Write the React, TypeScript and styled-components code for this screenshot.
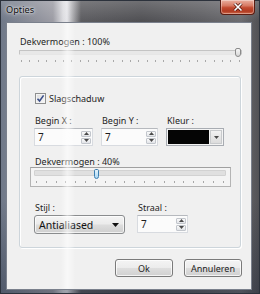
import React from 'react';
import styled, { createGlobalStyle } from 'styled-components';

const GlobalStyle = createGlobalStyle`
  html, body {
    margin: 0;
    padding: 0;
    background: #ffffff;
  }
  body {
    font-family: "Noto Sans", "Open Sans", sans-serif;
    font-size: 9px;
    color: #1e1e1e;
  }
`;

const SLIDER_TICKS = 27;
const FRAMED_TICKS = 20;

const Ticks: React.FC<{ count: number }> = ({ count }) => (
  <TickRow>
    {Array.from({ length: count }).map((_, i) => (
      <Tick key={i} />
    ))}
  </TickRow>
);

const Slider: React.FC<{ value: number; active?: boolean }> = ({ value, active }) => (
  <SliderBody>
    <Track>
      <Thumb $active={active} style={{ left: `calc(${value}% - ${value / 100 * 6}px)` }} />
    </Track>
    <Ticks count={active ? FRAMED_TICKS : SLIDER_TICKS} />
  </SliderBody>
);

const Arrow: React.FC<{ up?: boolean }> = ({ up }) => (
  <svg width="5" height="3" viewBox="0 0 5 3">
    <path d={up ? 'M0 3 L2.5 0 L5 3 Z' : 'M0 0 L2.5 3 L5 0 Z'} fill="#4a4a4a" />
  </svg>
);

const SpinBox: React.FC<{ value: string; width: number }> = ({ value, width }) => (
  <SpinFrame $width={width}>
    <SpinText>{value}</SpinText>
    <SpinButtons>
      <SpinButton><Arrow up /></SpinButton>
      <SpinButton><Arrow /></SpinButton>
    </SpinButtons>
  </SpinFrame>
);

const App: React.FC = () => (
  <>
    <GlobalStyle />
    <Frame>
      <TitleBar>
        <Title>Opties</Title>
        <CloseButton>
          <svg width="10" height="8" viewBox="0 0 10 8">
            <path d="M1.5 0.5 L8.5 7.5 M8.5 0.5 L1.5 7.5" stroke="#4a1008" strokeWidth="3" />
            <path d="M1.5 0.5 L8.5 7.5 M8.5 0.5 L1.5 7.5" stroke="#ffffff" strokeWidth="1.6" />
          </svg>
        </CloseButton>
      </TitleBar>
      <Client>
        <Label>Dekvermogen : 100%</Label>
        <TopSlider>
          <Slider value={100} />
        </TopSlider>

        <Group>
          <CheckRow>
            <CheckBox>
              <svg width="9" height="9" viewBox="0 0 9 9">
                <path d="M1.5 4.8 L3.6 7 L7.6 1.4" stroke="#3a4e8a" strokeWidth="1.6" fill="none" />
              </svg>
            </CheckBox>
            <span>Slagschaduw</span>
          </CheckRow>

          <FieldRow $gap={8} $top={11}>
            <Field>
              <Label>Begin X :</Label>
              <SpinBox value="7" width={59} />
            </Field>
            <Field>
              <Label>Begin Y :</Label>
              <SpinBox value="7" width={57} />
            </Field>
            <Field>
              <Label>Kleur :</Label>
              <ColorCombo>
                <Swatch />
                <ColorDrop><Arrow /></ColorDrop>
              </ColorCombo>
            </Field>
          </FieldRow>

          <SubLabel>Dekvermogen : 40%</SubLabel>
          <SliderBox>
            <Slider value={32} active />
          </SliderBox>

          <FieldRow $gap={12} $top={15}>
            <Field>
              <Label>Stijl :</Label>
              <Combo>
                <span>Antialiased</span>
                <svg width="7" height="4" viewBox="0 0 7 4">
                  <path d="M0 0 L3.5 4 L7 0 Z" fill="#111" />
                </svg>
              </Combo>
            </Field>
            <Field>
              <Label>Straal :</Label>
              <SpinBox value="7" width={51} />
            </Field>
          </FieldRow>
        </Group>

        <ButtonRow>
          <Button>Ok</Button>
          <Button>Annuleren</Button>
        </ButtonRow>
        <Streak />
      </Client>
    </Frame>
  </>
);

const Frame = styled.div`
  width: 260px;
  height: 294px;
  box-sizing: border-box;
  display: flex;
  flex-direction: column;
  border: 1px solid #2c323c;
  background:
    linear-gradient(to bottom, rgba(255, 255, 255, 0.18) 0px, rgba(255, 255, 255, 0) 20px, rgba(0, 0, 0, 0) 200px, rgba(20, 30, 50, 0.35) 294px),
    linear-gradient(to right, #6f7888 0px, #8a8d98 30px, #9c9ca4 52px, #dcdce0 62px, #e6e6ea 66px, #a8a8ac 72px, #5c5c60 80px, #505054 140px, #5e5e62 200px, #6c6c70 240px, #4e4e52 260px);
`;

const TitleBar = styled.div`
  height: 21px;
  display: flex;
  justify-content: space-between;
  align-items: flex-start;
  padding-left: 5px;
  padding-right: 4px;
`;

const Title = styled.div`
  margin-top: 3px;
  font-size: 9.2px;
  line-height: 12px;
  color: #101010;
  text-shadow: 0 0 4px rgba(255, 255, 255, 0.9), 0 0 2px rgba(255, 255, 255, 0.8);
`;

const CloseButton = styled.div`
  width: 35px;
  height: 15px;
  margin-top: -1px;
  box-sizing: border-box;
  display: flex;
  align-items: center;
  justify-content: center;
  border: 1px solid #5a1c12;
  border-top: none;
  border-radius: 0 0 4px 4px;
  background: linear-gradient(to bottom, #eab0a0 0%, #d77a64 40%, #c24a30 55%, #b03a22 80%, #d06a4a 100%);
  box-shadow: inset 0 0 0 1px rgba(255, 255, 255, 0.35);
`;

const Client = styled.div`
  position: relative;
  width: 246px;
  height: 268px;
  margin-left: 5px;
  box-sizing: border-box;
  border: 1px solid #7a808c;
  background: #f0f0f0;
  padding: 13px 9px 0 12px;
  display: flex;
  flex-direction: column;
`;

const Streak = styled.div`
  position: absolute;
  top: 0;
  bottom: 0;
  left: 54px;
  width: 14px;
  pointer-events: none;
  background: linear-gradient(to right, rgba(255, 255, 255, 0) 0%, rgba(255, 255, 255, 0.55) 45%, rgba(255, 255, 255, 0.35) 70%, rgba(255, 255, 255, 0) 100%);
`;

const Label = styled.div`
  font-size: 9px;
  line-height: 12px;
  padding-left: 1px;
  white-space: nowrap;
  color: #1e1e1e;
`;

const SubLabel = styled(Label)`
  margin-top: 10px;
  margin-bottom: -1px;
`;

const TopSlider = styled.div`
  width: 223px;
`;

const SliderBody = styled.div`
  display: flex;
  flex-direction: column;
`;

const Track = styled.div`
  position: relative;
  height: 3px;
  margin-top: 2px;
  border: 1px solid #c4c4c4;
  border-bottom-color: #e6e6e6;
  background: #e8e8e8;
  border-radius: 1px;
`;

const Thumb = styled.div<{ $active?: boolean }>`
  position: absolute;
  top: -3px;
  width: 6px;
  height: 9px;
  box-sizing: border-box;
  border: 1px solid ${p => (p.$active ? '#3c7fb1' : '#8a8a8a')};
  border-radius: 2px 2px 3px 3px;
  background: ${p =>
    p.$active
      ? 'linear-gradient(to bottom, #e6f4fc, #a9d6f3)'
      : 'linear-gradient(to bottom, #f6f6f6, #d8d8d8)'};
`;

const TickRow = styled.div`
  display: flex;
  justify-content: space-between;
  margin-top: 5px;
  padding: 0 2px;
`;

const Tick = styled.div`
  width: 1px;
  height: 2px;
  background: #a8a8a8;
`;

const Group = styled.div`
  margin-top: 14px;
  width: 222px;
  height: 172px;
  box-sizing: border-box;
  border: 1px solid #cdd5db;
  border-radius: 3px;
  box-shadow: inset 1px 1px 0 #ffffff, 1px 1px 0 #ffffff;
  padding: 15px 0 0 14px;
  display: flex;
  flex-direction: column;
`;

const CheckRow = styled.div`
  display: flex;
  align-items: center;
  gap: 3px;
  height: 12px;
  font-size: 9px;
  padding-left: 1px;
`;

const CheckBox = styled.div`
  width: 11px;
  height: 11px;
  box-sizing: border-box;
  border: 1px solid #8e8f8f;
  background: linear-gradient(135deg, #dcdcdc, #f8f8f8);
  box-shadow: inset 0 0 0 1px #f4f4f4;
  display: flex;
  align-items: center;
  justify-content: center;
`;

const FieldRow = styled.div<{ $gap: number; $top: number }>`
  display: flex;
  gap: ${p => p.$gap}px;
  margin-top: ${p => p.$top}px;
`;

const Field = styled.div`
  display: flex;
  flex-direction: column;
  gap: 1px;
`;

const SpinFrame = styled.div<{ $width: number }>`
  width: ${p => p.$width}px;
  height: 18px;
  box-sizing: border-box;
  border: 1px solid #d8dbe0;
  border-top-color: #b6b9be;
  background: #fbfbfb;
  display: flex;
  align-items: center;
  justify-content: space-between;
  padding: 0 1px 0 3px;
`;

const SpinText = styled.span`
  font-size: 10px;
  line-height: 12px;
`;

const SpinButtons = styled.div`
  display: flex;
  flex-direction: column;
  gap: 1px;
`;

const SpinButton = styled.div`
  width: 10px;
  height: 6px;
  box-sizing: border-box;
  border: 1px solid #c2c6cc;
  border-radius: 1px;
  background: linear-gradient(to bottom, #fafafa, #e2e4e8);
  display: flex;
  align-items: center;
  justify-content: center;
`;

const ColorCombo = styled.div`
  width: 58px;
  height: 18px;
  box-sizing: border-box;
  border: 1px solid #a8acb2;
  background: #f4f4f4;
  display: flex;
  padding: 1px;
  gap: 1px;
`;

const Swatch = styled.div`
  flex: 1;
  background: #050505;
`;

const ColorDrop = styled.div`
  width: 10px;
  border: 1px solid #c8cacc;
  background: linear-gradient(to bottom, #f2f2f2, #dcdcdc);
  display: flex;
  align-items: center;
  justify-content: center;
`;

const SliderBox = styled.div`
  width: 201px;
  height: 20px;
  box-sizing: border-box;
  margin-left: -4px;
  border: 1px solid #b4b4b4;
  border-top-color: #a0a0a0;
  background: #f4f4f4;
  padding: 1px 4px 0 3px;

  ${Track} {
    height: 4px;
    margin-top: 1px;
    background: #e0e0e0;
    border-color: #d2d2d2;
  }
  ${Thumb} {
    top: -2px;
    height: 10px;
    width: 5px;
  }
  ${TickRow} {
    margin-top: 5px;
  }
`;

const Combo = styled.div`
  width: 91px;
  height: 19px;
  box-sizing: border-box;
  border: 1px solid #8a8c8e;
  border-radius: 3px;
  background: linear-gradient(to bottom, #f4f4f4 0%, #ebebeb 48%, #dddddd 52%, #cfcfcf 100%);
  box-shadow: inset 0 0 0 1px rgba(255, 255, 255, 0.7);
  display: flex;
  align-items: center;
  justify-content: space-between;
  padding: 0 5px 0 4px;
  font-size: 10.5px;
  line-height: 12px;
  color: #111;
`;

const ButtonRow = styled.div`
  display: flex;
  justify-content: flex-end;
  gap: 11px;
  margin-top: 11px;
  width: 223px;
`;

const Button = styled.div`
  width: 58px;
  height: 18px;
  box-sizing: border-box;
  border: 1px solid #7a7a7a;
  border-radius: 3px;
  background: linear-gradient(to bottom, #f4f4f4 0%, #ececec 48%, #dedede 52%, #d0d0d0 100%);
  box-shadow: inset 0 0 0 1px rgba(255, 255, 255, 0.75);
  display: flex;
  align-items: center;
  justify-content: center;
  font-size: 9px;
  color: #1e1e1e;
`;

export default App;
